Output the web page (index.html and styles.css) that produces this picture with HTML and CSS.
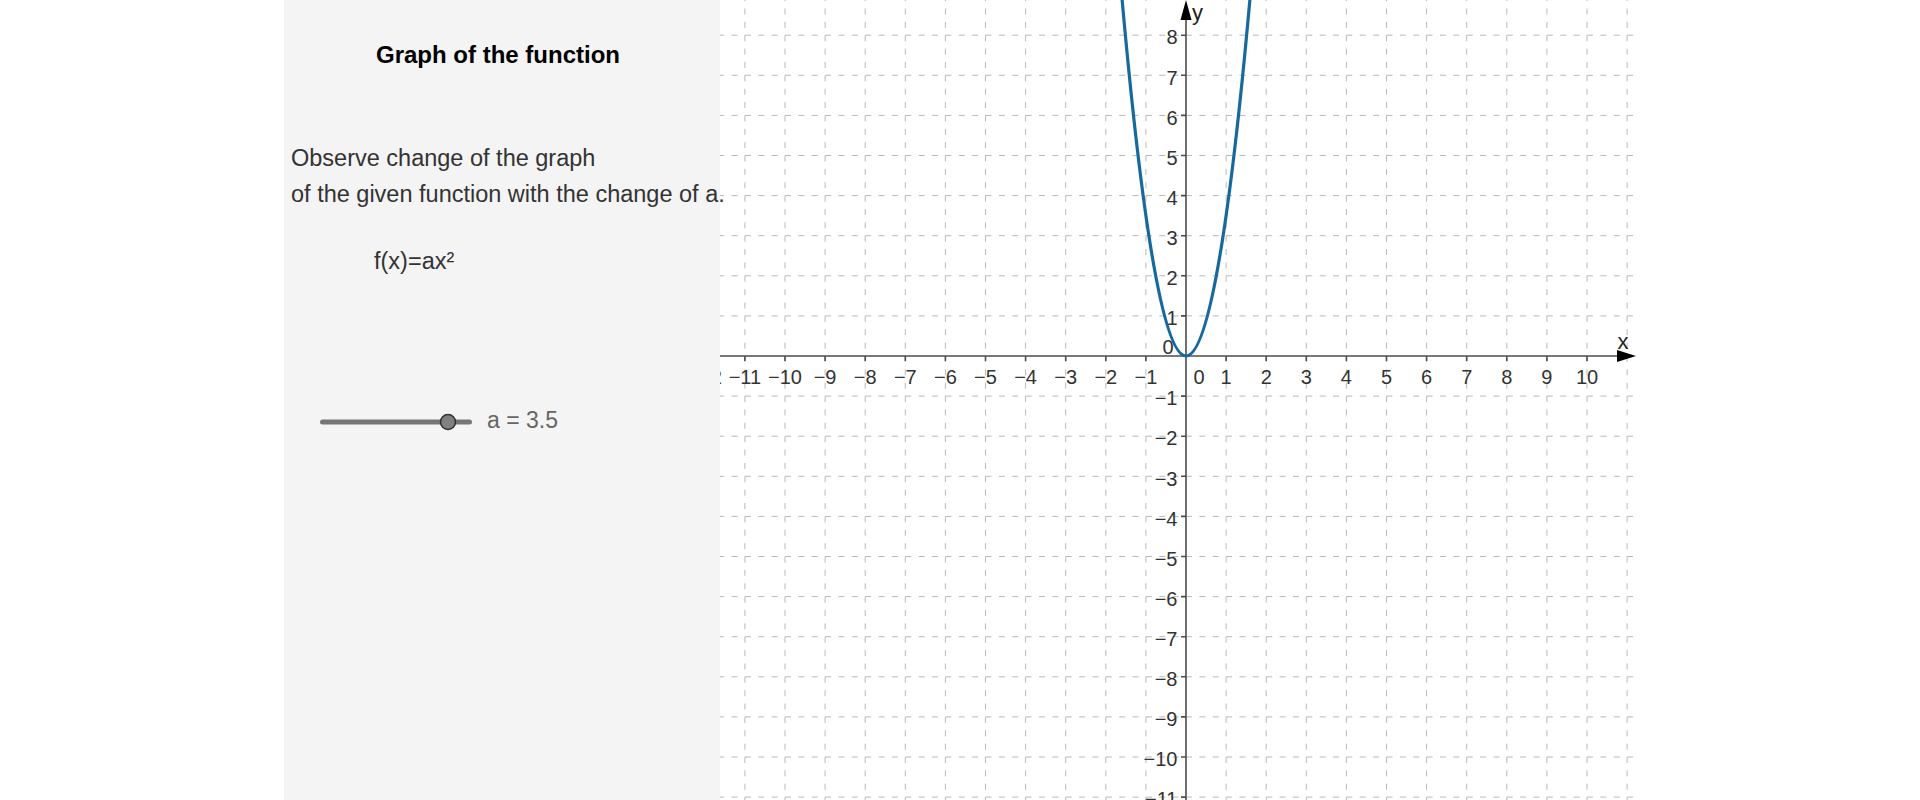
FILE: index.html
```html
<!DOCTYPE html>
<html lang="en">
<head>
<meta charset="utf-8">
<title>Graph of the function</title>
<link rel="stylesheet" href="styles.css">
</head>
<body>
<div class="applet">
  <aside class="panel">
    <h1 class="title">Graph of the function</h1>
    <p class="desc">Observe change of the graph<br>of the given function with the change of a.</p>
    <p class="formula">f(x)=ax²</p>
    <div class="slider-row">
      <svg class="slider" width="160" height="36" viewBox="0 0 160 36">
        <line x1="6.5" y1="20" x2="153.5" y2="20" class="slider-track"/>
        <circle cx="132" cy="20" r="7.5" class="slider-knob"/>
      </svg>
      <span class="slider-label">a = 3.5</span>
    </div>
  </aside>
  <div class="graph">
    <svg class="plot" width="916" height="800" viewBox="0 0 916 800">
      <path class="grid grid-h" d="M-15.2 35.2H916M-15.2 75.3H916M-15.2 115.4H916M-15.2 155.5H916M-15.2 195.6H916M-15.2 235.7H916M-15.2 275.8H916M-15.2 315.9H916M-15.2 396.1H916M-15.2 436.2H916M-15.2 476.3H916M-15.2 516.4H916M-15.2 556.5H916M-15.2 596.6H916M-15.2 636.7H916M-15.2 676.8H916M-15.2 716.9H916M-15.2 757H916M-15.2 797.1H916"/>
      <path class="grid grid-v" d="M24.9 -4.9V800M65 -4.9V800M105.1 -4.9V800M145.2 -4.9V800M185.3 -4.9V800M225.4 -4.9V800M265.5 -4.9V800M305.6 -4.9V800M345.7 -4.9V800M385.8 -4.9V800M425.9 -4.9V800M506.1 -4.9V800M546.2 -4.9V800M586.3 -4.9V800M626.4 -4.9V800M666.5 -4.9V800M706.6 -4.9V800M746.7 -4.9V800M786.8 -4.9V800M826.9 -4.9V800M867 -4.9V800M907.1 -4.9V800"/>

      <path class="axis" d="M0 356H900M466 800V18"/>
      <path class="axis" d="M24.9 356V361M65 356V361M105.1 356V361M145.2 356V361M185.3 356V361M225.4 356V361M265.5 356V361M305.6 356V361M345.7 356V361M385.8 356V361M425.9 356V361M506.1 356V361M546.2 356V361M586.3 356V361M626.4 356V361M666.5 356V361M706.6 356V361M746.7 356V361M786.8 356V361M826.9 356V361M867 356V361"/>
      <path class="axis" d="M461 35.2H466M461 75.3H466M461 115.4H466M461 155.5H466M461 195.6H466M461 235.7H466M461 275.8H466M461 315.9H466M461 396.1H466M461 436.2H466M461 476.3H466M461 516.4H466M461 556.5H466M461 596.6H466M461 636.7H466M461 676.8H466M461 716.9H466M461 757H466M461 797.1H466"/>
      <polygon class="arrow" points="897,350 916,356 897,362"/>
      <polygon class="arrow" points="460.5,20 466,0 471.5,20"/>

      <g class="xlabels">
        <text x="-15.2" y="383.9">−12</text>
        <text x="24.9" y="383.9">−11</text>
        <text x="65" y="383.9">−10</text>
        <text x="105.1" y="383.9">−9</text>
        <text x="145.2" y="383.9">−8</text>
        <text x="185.3" y="383.9">−7</text>
        <text x="225.4" y="383.9">−6</text>
        <text x="265.5" y="383.9">−5</text>
        <text x="305.6" y="383.9">−4</text>
        <text x="345.7" y="383.9">−3</text>
        <text x="385.8" y="383.9">−2</text>
        <text x="425.9" y="383.9">−1</text>
        <text x="479" y="383.9">0</text>
        <text x="506.1" y="383.9">1</text>
        <text x="546.2" y="383.9">2</text>
        <text x="586.3" y="383.9">3</text>
        <text x="626.4" y="383.9">4</text>
        <text x="666.5" y="383.9">5</text>
        <text x="706.6" y="383.9">6</text>
        <text x="746.7" y="383.9">7</text>
        <text x="786.8" y="383.9">8</text>
        <text x="826.9" y="383.9">9</text>
        <text x="867" y="383.9">10</text>
        <text x="448" y="353.9">0</text>
      </g>
      <g class="ylabels">
        <text x="457.5" y="44.4">8</text>
        <text x="457.5" y="84.5">7</text>
        <text x="457.5" y="124.6">6</text>
        <text x="457.5" y="164.7">5</text>
        <text x="457.5" y="204.8">4</text>
        <text x="457.5" y="244.9">3</text>
        <text x="457.5" y="285">2</text>
        <text x="457.5" y="325.1">1</text>
        <text x="457.5" y="405.3">−1</text>
        <text x="457.5" y="445.4">−2</text>
        <text x="457.5" y="485.5">−3</text>
        <text x="457.5" y="525.6">−4</text>
        <text x="457.5" y="565.7">−5</text>
        <text x="457.5" y="605.8">−6</text>
        <text x="457.5" y="645.9">−7</text>
        <text x="457.5" y="686">−8</text>
        <text x="457.5" y="726.1">−9</text>
        <text x="457.5" y="766.2">−10</text>
        <text x="457.5" y="806.3">−11</text>
      </g>
      <text class="axis-name" x="897.5" y="349">x</text>
      <text class="axis-name" x="472" y="20.4">y</text>

      <path class="curve" d="M397.83 -49.6Q466 761.6 534.17 -49.6"/>
    </svg>
  </div>
</div>
</body>
</html>
```

FILE: styles.css
```css
html, body {
  margin: 0;
  padding: 0;
  background: #ffffff;
}

body {
  font-family: "Liberation Sans", Arial, sans-serif;
  overflow: hidden;
}

.applet {
  display: flex;
  width: 1352px;
  height: 800px;
  margin: 0 auto;
}

.panel {
  flex: none;
  width: 436px;
  height: 800px;
  box-sizing: border-box;
  padding-left: 7px;
  padding-top: 1px;
  background: #f4f4f4;
  position: relative;
  z-index: 1;
  white-space: nowrap;
}

.title {
  margin: 36px 0 0 85px;
  font-size: 24px;
  font-weight: bold;
  line-height: 36px;
  color: #000000;
}

.desc {
  margin: 67px 0 0 0;
  font-size: 23.5px;
  line-height: 36px;
  color: #333333;
}

.formula {
  margin: 31px 0 0 83px;
  font-size: 23.5px;
  line-height: 36px;
  color: #333333;
}

.slider-row {
  display: flex;
  align-items: flex-start;
  height: 36px;
  margin: 122.5px 0 0 25px;
}

.slider {
  display: block;
  flex: none;
}

.slider-track {
  stroke: #767676;
  stroke-width: 5;
  stroke-linecap: round;
}

.slider-knob {
  fill: #808080;
  stroke: #2f2f2f;
  stroke-width: 1.5;
}

.slider-label {
  margin-left: 11px;
  font-size: 23px;
  line-height: 36px;
  color: #666666;
}

.graph {
  flex: none;
  width: 916px;
  height: 800px;
  background: #ffffff;
  overflow: hidden;
}

.plot {
  display: block;
  font-family: "Liberation Sans", Arial, sans-serif;
}

.grid {
  fill: none;
  stroke: #b9b9b9;
  stroke-width: 1;
  stroke-dasharray: 6 7.367;
}

.axis {
  fill: none;
  stroke: #4d4d4d;
  stroke-width: 1.6;
}

.arrow {
  fill: #000000;
}

.xlabels text {
  font-size: 20px;
  fill: #333333;
  text-anchor: middle;
}

.ylabels text {
  font-size: 20px;
  fill: #333333;
  text-anchor: end;
}

.axis-name {
  font-size: 22px;
  fill: #222222;
}

.curve {
  fill: none;
  stroke: #16699f;
  stroke-width: 3.2;
}
```
